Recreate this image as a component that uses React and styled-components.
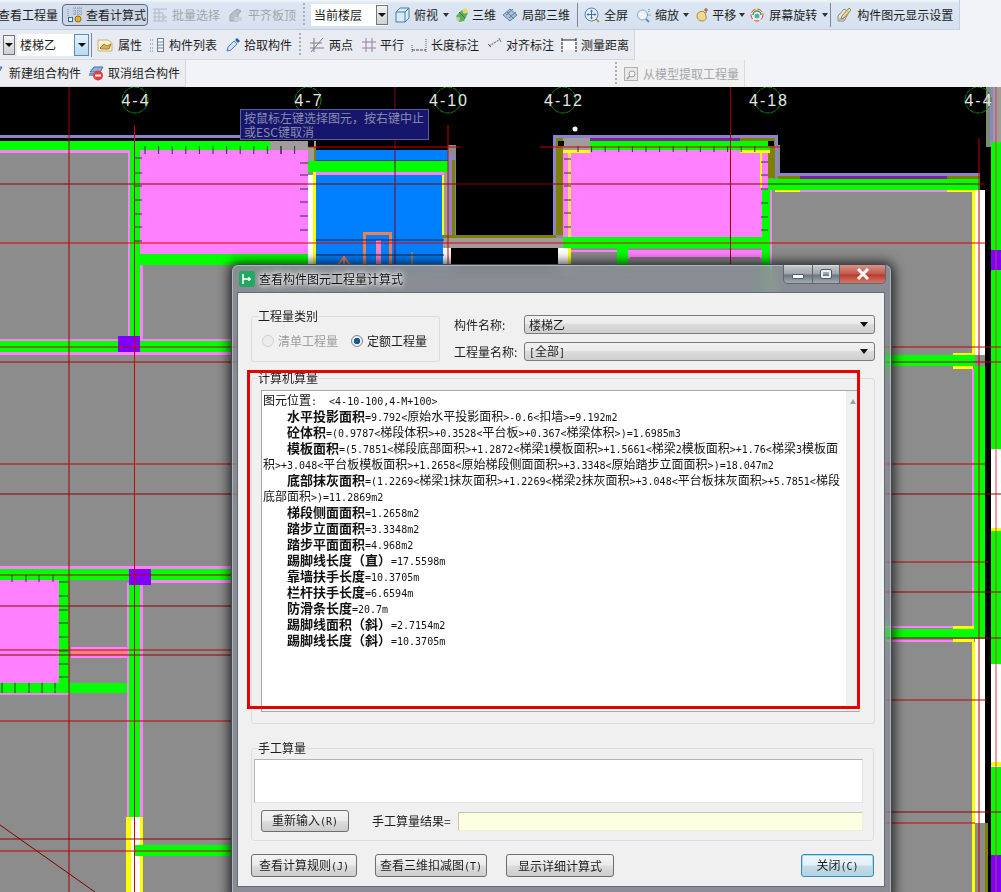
import React from 'react'
import styled, { createGlobalStyle } from 'styled-components'

const GlobalStyle = createGlobalStyle`
    html, body {
        margin: 0;
        padding: 0;
        background: #000;
    }
    body {
        font-family: "Noto Sans CJK SC", "Liberation Sans", sans-serif;
        font-size: 12px;
        color: #1c1c1c;
    }
`

// half width latin like the old bitmap font, CJK stays 12px
const Half = styled.span`
    font-family: "DejaVu Sans Mono", monospace;
    font-size: 10px;
`
const Mix = ({ children }) => (
    <span>
        {String(children).split(/([\x00-\x7f]+)/).map((part, i) =>
            i % 2 === 1 ? <Half key={i}>{part}</Half> : part
        )}
    </span>
)

/* ---------- toolbar icons ---------- */
const icons = {
    calc: <>
        <path d="M6 1h9M6 4h9M6 7h9M8 1v8M11 1v8M14 1v8" stroke="#7f8fa6" strokeWidth="1" fill="none" strokeDasharray="1 1" />
        <path d="M1 2v7" stroke="#7f8fa6" strokeDasharray="1 1" />
        <rect x="1.5" y="10.5" width="4" height="4" fill="#fff" stroke="#2a62b8" />
        <circle cx="11" cy="12" r="3" fill="#e8b030" stroke="#9a6a10" />
    </>,
    batch: <>
        <path d="M1 2h14M1 6h10M1 10h10M1 14h14M3 2v12M7 2v12" stroke="#b4bac4" fill="none" />
        <path d="M10 6l5 4-5 4z" fill="#c2c8d2" />
    </>,
    flat: <>
        <path d="M2 14V8l7-6 4 2-3 4v6z" fill="#b9bec6" stroke="#a0a6b0" />
        <rect x="6" y="10" width="8" height="4" fill="#ccd0d6" />
    </>,
    cube: <>
        <path d="M2 5l4-4h9v10l-4 4H2z" fill="#d6ecf8" stroke="#4c7d9c" />
        <path d="M2 5h9v10M11 5l4-4" fill="none" stroke="#4c7d9c" />
    </>,
    three: <>
        <path d="M2 9l6-6 6 3-4 8-5 1z" fill="#58b060" />
        <circle cx="11" cy="4" r="2.5" fill="#e8d860" />
        <circle cx="4" cy="12" r="2" fill="#d8c8a0" />
        <path d="M5 5l6 6" stroke="#2e7e3c" />
    </>,
    local: <>
        <path d="M1 8l7-6 7 6-7 6z" fill="#a8c0d8" stroke="#5f7f9f" />
        <path d="M4 8l7-6M7 11l7-6M5 5l7 7" stroke="#5f7f9f" fill="none" />
    </>,
    full: <>
        <circle cx="7.5" cy="7.5" r="6.5" fill="#e4eef8" stroke="#5a7fa8" />
        <path d="M7.5 3v9M3 7.5h9" stroke="#3c6ea8" />
        <path d="M6 4.5l1.5-2 1.5 2zM6 10.5l1.5 2 1.5-2zM4.5 6l-2 1.5 2 1.5zM10.5 6l2 1.5-2 1.5z" fill="#3c6ea8" />
        <path d="M12 12l3 3" stroke="#c08030" strokeWidth="1.5" />
    </>,
    zoom: <>
        <circle cx="6.5" cy="8" r="5" fill="#eef4fa" stroke="#8ca8c4" />
        <path d="M10 12l3 3" stroke="#6c8cac" strokeWidth="2" />
        <path d="M13 2v4M11.5 8h3" stroke="#3c6ea8" strokeDasharray="1 1" />
    </>,
    pan: <>
        <path d="M3 9c0-3 2-4 3-4l1-1 1 1 1-1 2 2 1 3c1 3-1 5-4 5s-5-2-5-5z" fill="#f0d890" stroke="#b09040" />
        <path d="M12 1v5M10 3h4" stroke="#a04040" />
    </>,
    rotate: <>
        <circle cx="8" cy="8" r="6" fill="#f4f0d8" stroke="#e04030" strokeDasharray="5 2" />
        <path d="M4 8a4 4 0 0 1 8 0" stroke="#30a050" fill="none" strokeWidth="1.5" />
        <circle cx="8" cy="9" r="2.5" fill="#50a8d8" />
    </>,
    setting: <>
        <path d="M2 9l6-7 5 3-5 9H2z" fill="#e4e4e4" stroke="#8c8c8c" />
        <path d="M13 1L6 9l-1 3 3-1 7-8z" fill="#e8d890" stroke="#98884c" />
        <path d="M3 12h5" stroke="#7090b0" />
    </>,
    prop: <>
        <path d="M1 3h10l4 3v8H1z" fill="#fbf2d8" stroke="#c8b078" />
        <path d="M3 11l4-4 3 2 4-2-2 5H4z" fill="#e0b050" stroke="#a88030" />
    </>,
    list: <>
        <path d="M1 3h3M1 7h3M1 11h3M1 14h3" stroke="#6c8098" strokeDasharray="1 1" />
        <rect x="8.5" y="1.5" width="6" height="13" fill="#f6f8fa" stroke="#6c8098" />
        <path d="M8 5h7M8 8h7M8 11h7" stroke="#6c8098" />
    </>,
    pick: <>
        <path d="M2 14l1-4 6-6 3 3-6 6z" fill="#cfe2f6" stroke="#4c7cc0" />
        <path d="M10 3l2-2 3 3-2 2z" fill="#2c5ca0" />
    </>,
    twoPts: <>
        <path d="M1 11h14M1 6h12" stroke="#8c7c90" />
        <path d="M5 1v14M14 1L2 15" stroke="#7c7c88" />
    </>,
    parallel: <>
        <path d="M5 1v14M11 1v14M1 5h14M1 11h14" stroke="#9c7ca4" />
    </>,
    lenDim: <>
        <path d="M1 8v7M15 2v13" stroke="#3c6c5c" strokeDasharray="1 1" />
        <path d="M1 13h14" stroke="#404040" strokeDasharray="3 1" />
    </>,
    alignDim: <>
        <path d="M2 7l3 3M3 9l10-6" stroke="#4c4c4c" strokeDasharray="2 1" />
        <path d="M13 1l2 4" stroke="#3c8c5c" />
    </>,
    measure: <>
        <rect x="2" y="3" width="12" height="10" fill="#fff" />
        <path d="M1 1v14M15 1v14" stroke="#222" strokeDasharray="3 1" />
        <path d="M1 3h14" stroke="#222" />
    </>,
    newGroup: <>
        <path d="M2 2h11l-4 7-7-2z" fill="#8cb4e0" stroke="#3c6cac" />
    </>,
    cancelGroup: <>
        <path d="M2 7l4-5h9l-3 5z" fill="#8cb4e0" stroke="#3c6cac" />
        <rect x="1" y="8" width="7" height="3" fill="#6c9cd4" />
        <circle cx="10" cy="10.5" r="5" fill="#e04040" />
        <rect x="7" y="9.5" width="6" height="2" fill="#fff" />
    </>,
    extract: <>
        <rect x="1.5" y="1.5" width="13" height="13" fill="#e8e8e8" stroke="#b0b0b0" />
        <circle cx="9" cy="8" r="3" fill="#f4f4f4" stroke="#a0a0a0" />
        <path d="M7 10l-3 3" stroke="#a0a0a0" strokeWidth="1.5" />
    </>,
}

const Icon = ({ name }) => <IconSvg viewBox="0 0 16 16">{icons[name]}</IconSvg>

const Tool = ({ icon, label, ml = 0, gap = 4, caret, off }) => (
    <ToolItem $ml={ml} $gap={gap} $off={off}>
        {icon && <Icon name={icon} />}
        <span>{label}</span>
        {caret && <Caret />}
    </ToolItem>
)

/* ---------- cad drawing data, page coordinates ---------- */
const G = '#00ff00', P = '#ff80ff', Y = '#ffff00', W = '#ffffff', B = '#0080ff'
const GR = '#8c8c8c', O = '#808000', V = '#8c84c8', PU = '#8000ff', K = '#000000', DG = '#a09c9c'

const rects = [
    [0, 87, 1001, 805, K],
    [0, 145, 456, 747, GR],
    [456, 248, 324, 644, GR],
    [556, 145, 224, 120, GR],
    [770, 176, 215, 716, GR],
    // left upper room
    [0, 135, 308, 3, V],
    [0, 141, 270, 9, G],
    [270, 141, 38, 9, DG],
    [0, 150, 128, 3, P],
    [128, 150, 2, 190, P],
    [130, 141, 10, 200, G],
    [140, 150, 168, 104, P],
    [134, 254, 174, 11, G],
    [140, 265, 3, 75, P],
    [0, 339, 231, 2, P],
    [0, 341, 231, 11, G],
    [0, 352, 231, 3, P],
    [118, 336, 22, 16, PU],
    // blue stair
    [308, 141, 8, 20, DG],
    [308, 141, 6, 6, K],
    [314, 147, 2, 14, O],
    [316, 145, 132, 5, K],
    [316, 150, 132, 10, B],
    [316, 160, 132, 2, '#404080'],
    [308, 161, 140, 11, G],
    [316, 172, 128, 3, P],
    [316, 175, 128, 90, B],
    [308, 175, 5, 90, W],
    [313, 172, 3, 93, Y],
    [442, 175, 2, 60, Y],
    [444, 172, 4, 63, P],
    [448, 156, 7, 80, V],
    [452, 160, 3, 75, O],
    [456, 87, 100, 161, K],
    [443, 235, 113, 3, O],
    [443, 238, 120, 10, DG],
    [444, 172, 4, 63, DG],
    [443, 248, 8, 17, W],
    [451, 248, 107, 17, K],
    [363, 232, 29, 3, '#f08050'],
    [363, 232, 3, 33, '#f08050'],
    [389, 232, 3, 33, '#f08050'],
    [376, 240, 5, 25, '#ff80c0'],
    [411, 252, 2, 13, '#a08060'],
    // second stair
    [553, 135, 225, 3, V],
    [553, 135, 3, 100, V],
    [775, 135, 3, 40, V],
    [556, 138, 7, 97, O],
    [768, 138, 7, 40, O],
    [563, 138, 27, 14, DG],
    [590, 138, 150, 3, '#8020a0'],
    [590, 141, 150, 9, G],
    [740, 138, 30, 3, O],
    [740, 141, 30, 9, G],
    [558, 141, 6, 5, K],
    [768, 141, 6, 5, K],
    [563, 150, 27, 3, Y],
    [740, 150, 30, 3, Y],
    [590, 150, 150, 3, P],
    [563, 153, 8, 84, P],
    [568, 153, 3, 84, '#ffd860'],
    [571, 153, 191, 84, P],
    [760, 153, 2, 35, Y],
    [762, 153, 6, 37, P],
    [762, 190, 6, 75, G],
    [563, 237, 205, 11, G],
    [558, 248, 10, 17, W],
    [568, 248, 3, 17, Y],
    [571, 248, 46, 17, GR],
    [571, 250, 46, 2, P],
    [617, 248, 11, 17, G],
    [628, 250, 134, 8, P],
    [630, 257, 130, 2, '#907090'],
    // right room
    [778, 173, 202, 3, V],
    [778, 176, 22, 3, O],
    [800, 176, 147, 3, '#8020a0'],
    [947, 176, 33, 3, O],
    [768, 179, 212, 11, G],
    [768, 190, 2, 170, G],
    [770, 190, 2, 170, P],
    [775, 190, 25, 2, Y],
    [800, 190, 147, 2, P],
    [947, 190, 28, 2, Y],
    [972, 190, 3, 165, Y],
    [975, 190, 10, 165, W],
    [985, 145, 6, 747, K],
    [980, 145, 5, 45, K],
    [986, 87, 4, 60, '#7c8c70'],
    [990, 87, 3, 60, V],
    [993, 87, 8, 55, DG],
    [991, 142, 10, 307, G],
    [991, 250, 10, 20, PU],
    [991, 449, 10, 82, W],
    [991, 528, 10, 3, Y],
    [991, 531, 10, 133, G],
    [991, 664, 10, 103, W],
    [991, 762, 10, 4, Y],
    [991, 767, 10, 88, G],
    [991, 855, 10, 37, PU],
    // right lower
    [770, 355, 205, 11, G],
    [953, 353, 22, 2, Y],
    [953, 366, 20, 3, Y],
    [974, 366, 11, 264, G],
    [972, 369, 2, 257, P],
    [770, 626, 183, 2, P],
    [953, 626, 21, 3, Y],
    [770, 629, 215, 9, G],
    [770, 640, 183, 2, P],
    [953, 639, 21, 3, Y],
    [972, 642, 3, 250, Y],
    [975, 639, 10, 253, W],
    [975, 823, 13, 69, GR],
    [985, 823, 3, 69, O],
    // left lower
    [0, 566, 231, 3, P],
    [0, 569, 231, 11, G],
    [143, 580, 88, 3, P],
    [0, 580, 59, 103, P],
    [59, 580, 10, 113, G],
    [0, 683, 128, 10, G],
    [0, 693, 69, 2, P],
    [71, 647, 57, 11, P],
    [71, 650, 57, 5, '#ff8080'],
    [127, 583, 2, 234, P],
    [129, 580, 11, 237, G],
    [140, 583, 3, 234, P],
    [129, 569, 22, 16, PU],
    [126, 817, 17, 75, Y],
    [131, 817, 9, 75, W],
    [135, 845, 96, 11, G],
]

const range = (from, step, count) => Array.from({ length: count }, (_, i) => from + i * step)

const ticks = [
    ...range(145, 13.6, 12).map(x => [x, 146, x, 154]),
    ...range(281, 14, 1).map(x => [x, 146, x, 154]),
    ...[158, 173, 186, 200, 214, 227, 241].map(y => [134, y, 142, y]),
    ...[163, 175, 189, 202, 216, 230].map(y => [300, y, 308, y]),
    ...range(578, 13.6, 14).map(x => [x, 146, x, 152]),
    ...[159, 173, 186, 200, 213, 227].map(y => [564, y, 571, y]),
    ...[162, 175, 189, 203, 217, 230].map(y => [761, y, 768, y]),
    ...[12, 26, 39, 53].map(x => [x, 575, x, 582]),
    ...[582, 596, 610, 623, 637, 651, 664, 677].map(y => [59, y, 68, y]),
    ...[2, 15, 29, 42, 55].map(x => [x, 683, x, 693]),
]

const redLines = [
    [69, 87, 69, 892, '#a00000'],
    [134.5, 125, 134.5, 892, '#d00000'],
    [395, 87, 395, 265, '#800030'],
    [448, 125, 448, 265, '#d00000'],
    [730.5, 87, 730.5, 265, '#a00000'],
    [979, 138, 979, 892, '#c00000'],
    [996, 87, 996, 892, '#d04040'],
    [308, 147, 460, 147, '#d00000'],
    [540, 147, 780, 147, '#d00000'],
    [0, 184, 985, 184, '#900000'],
    [0, 243, 985, 243, '#e00000'],
    [0, 347, 1001, 347, '#c00000'],
    [0, 362, 1001, 362, '#b00000'],
    [0, 464, 985, 464, '#c00000'],
    [0, 494, 1001, 494, '#900000'],
    [885, 562, 988, 562, '#c00000'],
    [885, 592, 1001, 592, '#a00000'],
    [885, 638, 1001, 638, '#900000'],
    [885, 700, 986, 700, '#c00000'],
    [885, 812, 1001, 812, '#900000'],
    [885, 823, 975, 823, '#d00000'],
    [0, 575, 231, 575, '#b00000'],
    [0, 606, 231, 606, '#900000'],
    [0, 650, 231, 650, '#c00000'],
    [0, 655, 231, 655, '#900000'],
    [0, 721, 231, 721, '#c00000'],
    [0, 839, 231, 839, '#900000'],
    [0, 851, 231, 851, '#c00000'],
    [0, 825, 95, 892, '#800000'],
]

const axes = [[135, '4-4'], [308, '4-7'], [448, '4-10'], [563, '4-12'], [768, '4-18'], [978, '4-4']]

const Drawing = () => (
    <CadSvg viewBox="0 87 1001 805">
        {rects.map(([x, y, w, h, c], i) => <rect key={i} x={x} y={y} width={w} height={h} fill={c} />)}
        {ticks.map(([x1, y1, x2, y2], i) => <line key={i} x1={x1} y1={y1} x2={x2} y2={y2} stroke="#303048" />)}
        <path d="M338 265l6-8 6 8M344 257v8" stroke="#f08050" strokeWidth="2" fill="none" />
        <path d="M316 240h128M316 255h128" stroke="#202040" />
        {redLines.map(([x1, y1, x2, y2, c], i) => <line key={i} x1={x1} y1={y1} x2={x2} y2={y2} stroke={c} />)}
        {axes.map(([x, name]) => (
            <g key={x + name}>
                <circle cx={x} cy={100} r={13} fill="none" stroke="#0c8c0c" strokeDasharray="5 1" />
                <AxisText x={x + 1} y={105.5} textAnchor="middle">{name}</AxisText>
            </g>
        ))}
        <circle cx={575} cy={129} r={2.5} fill="#fff" />
    </CadSvg>
)

/* ---------- calculation text ---------- */
const calcLines = [
    { text: '图元位置:  <4-10-100,4-M+100>' },
    { label: '水平投影面积', text: '=9.792<原始水平投影面积>-0.6<扣墙>=9.192m2' },
    { label: '砼体积', text: '=(0.9787<梯段体积>+0.3528<平台板>+0.367<梯梁体积>)=1.6985m3' },
    { label: '模板面积', text: '=(5.7851<梯段底部面积>+1.2872<梯梁1模板面积>+1.5661<梯梁2模板面积>+1.76<梯梁3模板面' },
    { text: '积>+3.048<平台板模板面积>+1.2658<原始梯段侧面面积>+3.3348<原始踏步立面面积>)=18.047m2' },
    { label: '底部抹灰面积', text: '=(1.2269<梯梁1抹灰面积>+1.2269<梯梁2抹灰面积>+3.048<平台板抹灰面积>+5.7851<梯段' },
    { text: '底部面积>)=11.2869m2' },
    { label: '梯段侧面面积', text: '=1.2658m2' },
    { label: '踏步立面面积', text: '=3.3348m2' },
    { label: '踏步平面面积', text: '=4.968m2' },
    { label: '踢脚线长度（直）', text: '=17.5598m' },
    { label: '靠墙扶手长度', text: '=10.3705m' },
    { label: '栏杆扶手长度', text: '=6.6594m' },
    { label: '防滑条长度', text: '=20.7m' },
    { label: '踢脚线面积（斜）', text: '=2.7154m2' },
    { label: '踢脚线长度（斜）', text: '=10.3705m' },
]

export default function App() {
    return (
        <Page>
            <GlobalStyle />

            <ToolRow $bg="linear-gradient(#f4f7fb 0, #dde6f3 3px, #d6e0ef 100%)" $line="#c3cede" $width={960}>
                <Tool label="查看工程量" ml={-2} />
                <Pressed>
                    <Icon name="calc" />
                    <span>查看计算式</span>
                </Pressed>
                <Tool icon="batch" label="批量选择" ml={4} off />
                <Tool icon="flat" label="平齐板顶" ml={8} off />
                <Grip $ml={7} />
                <ToolSelect $ml={6} $width={77}>
                    <span>当前楼层</span>
                    <SelectArrow />
                </ToolSelect>
                <Tool icon="cube" label="俯视" ml={6} caret />
                <Tool icon="three" label="三维" ml={5} gap={2} />
                <Tool icon="local" label="局部三维" ml={6} />
                <Sep $ml={7} />
                <Tool icon="full" label="全屏" ml={6} />
                <Tool icon="zoom" label="缩放" ml={8} gap={3} caret />
                <Tool icon="pan" label="平移" ml={5} gap={2} caret />
                <Tool icon="rotate" label="屏幕旋转" ml={4} caret />
                <Sep $ml={2} />
                <Tool icon="setting" label="构件图元显示设置" ml={5} gap={5} />
            </ToolRow>

            <ToolRow $bg="#e8ebf1" $line="#d2d6de" $width={635}>
                <SelectArrow $ml={3} />
                <ToolSelect $ml={2} $width={72} $focus>
                    <span>楼梯乙</span>
                    <SelectArrow $focus />
                </ToolSelect>
                <Sep $ml={2} />
                <Tool icon="prop" label="属性" ml={5} gap={5} />
                <Tool icon="list" label="构件列表" ml={7} />
                <Tool icon="pick" label="拾取构件" ml={8} gap={3} />
                <Grip $ml={7} />
                <Tool icon="twoPts" label="两点" ml={8} />
                <Tool icon="parallel" label="平行" ml={8} gap={3} />
                <Tool icon="lenDim" label="长度标注" ml={7} />
                <Tool icon="alignDim" label="对齐标注" ml={7} />
                <Tool icon="measure" label="测量距离" ml={7} />
            </ToolRow>

            <LastRow>
                <ToolRow $bg="#eceef2" $line="#d2d6de" $width={186} $h={27}>
                    <Tool icon="newGroup" label="新建组合构件" ml={-11} />
                    <Tool icon="cancelGroup" label="取消组合构件" ml={7} />
                </ToolRow>
                <ExtractBar>
                    <Grip $ml={1} />
                    <Tool icon="extract" label="从模型提取工程量" ml={6} off />
                </ExtractBar>
            </LastRow>

            <Drawing />

            <HintBox>
                按鼠标左键选择图元，按右键中止
                <br />
                或ESC键取消
            </HintBox>

            <Dialog>
                <TitleBar>
                    <AppIcon viewBox="0 0 16 16">
                        <rect width="16" height="16" rx="3" fill="#22a860" />
                        <path d="M4 3v10M4 8h8M10 6v4" stroke="#fff" strokeWidth="1.5" fill="none" />
                    </AppIcon>
                    <TitleText>查看构件图元工程量计算式</TitleText>
                    <WinButtons>
                        <WinButton $w={28}><MinGlyph /></WinButton>
                        <WinButton $w={27}><MaxGlyph /></WinButton>
                        <WinButton $w={46} $close>
                            <svg width="14" height="12" viewBox="0 0 14 12">
                                <path d="M2 1l10 10M12 1L2 11" stroke="#fff" strokeWidth="3" />
                            </svg>
                        </WinButton>
                    </WinButtons>
                </TitleBar>

                <Client>
                    <TopRow>
                        <Group $w={189} $h={54}>
                            <GroupTitle>工程量类别</GroupTitle>
                            <RadioRow>
                                <Radio />
                                <RadioLabel $off>清单工程量</RadioLabel>
                                <Radio $checked $ml={9} />
                                <RadioLabel>定额工程量</RadioLabel>
                            </RadioRow>
                        </Group>
                        <FormCol>
                            <FormRow>
                                <FormLabel>构件名称:</FormLabel>
                                <Select><span>楼梯乙</span><SmallArrow /></Select>
                            </FormRow>
                            <FormRow>
                                <FormLabel>工程量名称:</FormLabel>
                                <Select><Mix>[全部]</Mix><SmallArrow /></Select>
                            </FormRow>
                        </FormCol>
                    </TopRow>

                    <Group $w={624} $h={354} $mt={8}>
                        <GroupTitle>计算机算量</GroupTitle>
                        <CalcBox>
                            <CalcText>
                                {calcLines.map((line, i) => (
                                    <CalcLine key={i} $indent={!!line.label}>
                                        {line.label && <Strong>{line.label}</Strong>}
                                        <Mix>{line.text}</Mix>
                                    </CalcLine>
                                ))}
                            </CalcText>
                            <ScrollBar><ScrollUp /></ScrollBar>
                        </CalcBox>
                    </Group>

                    <Group $w={623} $h={101} $mt={16}>
                        <GroupTitle>手工算量</GroupTitle>
                        <ManualInput />
                        <ManualRow>
                            <Button $w={88} $h={22}><Mix>重新输入(R)</Mix></Button>
                            <ResultLabel>手工算量结果=</ResultLabel>
                            <ResultInput />
                        </ManualRow>
                    </Group>

                    <Footer>
                        <Button $w={106}><Mix>查看计算规则(J)</Mix></Button>
                        <Button $w={112} $ml={18}><Mix>查看三维扣减图(T)</Mix></Button>
                        <Button $w={108} $ml={19}>显示详细计算式</Button>
                        <CloseButton $w={73}><Mix>关闭(C)</Mix></CloseButton>
                    </Footer>
                </Client>
            </Dialog>

            <Marker />
        </Page>
    )
}

const Page = styled.div`
    position: relative;
    width: 1001px;
    height: 892px;
    overflow: hidden;
    background: #f1f3f6;
    display: flex;
    flex-direction: column;
`
const ToolRow = styled.div`
    flex: none;
    display: flex;
    align-items: center;
    width: ${({ $width }) => $width}px;
    height: ${({ $h }) => $h ?? 30}px;
    box-sizing: border-box;
    background: ${({ $bg }) => $bg};
    border-bottom: 1px solid ${({ $line }) => $line};
    border-right: 1px solid ${({ $line }) => $line};
    overflow: hidden;
    white-space: nowrap;
`
const LastRow = styled.div`
    flex: none;
    display: flex;
    height: 27px;
`
const ExtractBar = styled.div`
    display: flex;
    align-items: center;
    box-sizing: border-box;
    margin-left: 428px;
    width: 131px;
    height: 27px;
    background: #f1f1f1;
    border-right: 1px solid #dcdcdc;
`
const ToolItem = styled.div`
    flex: none;
    display: flex;
    align-items: center;
    gap: ${({ $gap }) => $gap}px;
    margin-left: ${({ $ml }) => $ml}px;
    line-height: 16px;
    color: ${({ $off }) => ($off ? '#a2a6ac' : '#1c1c1c')};
`
const IconSvg = styled.svg`
    flex: none;
    width: 16px;
    height: 16px;
`
const Caret = styled.i`
    width: 0;
    height: 0;
    margin-left: 1px;
    border-left: 3px solid transparent;
    border-right: 3px solid transparent;
    border-top: 4px solid #333;
`
const Pressed = styled.div`
    flex: none;
    display: flex;
    align-items: center;
    gap: 3px;
    box-sizing: border-box;
    width: 86px;
    height: 22px;
    margin-left: 4px;
    padding-left: 4px;
    border: 1px solid #5c6a7c;
    border-radius: 4px;
    background: #cbd6e6;
    line-height: 16px;
`
const Grip = styled.i`
    flex: none;
    width: 2px;
    height: 24px;
    margin-left: ${({ $ml }) => $ml}px;
    background: repeating-linear-gradient(#a9afb8 0 2px, transparent 2px 4px);
`
const Sep = styled.i`
    flex: none;
    width: 1px;
    height: 24px;
    margin-left: ${({ $ml }) => $ml}px;
    background: #7c8794;
`
const ToolSelect = styled.div`
    flex: none;
    display: flex;
    align-items: center;
    justify-content: space-between;
    box-sizing: border-box;
    width: ${({ $width }) => $width}px;
    height: 22px;
    margin-left: ${({ $ml }) => $ml}px;
    padding-left: 3px;
    background: #fff;
    line-height: 16px;
`
const SelectArrow = styled.i`
    flex: none;
    position: relative;
    display: flex;
    align-items: center;
    justify-content: center;
    box-sizing: border-box;
    width: ${({ $focus }) => ($focus ? 15 : 12)}px;
    height: ${({ $focus }) => ($focus ? 22 : 20)}px;
    margin-left: ${({ $ml }) => $ml ?? 0}px;
    border: 1px solid ${({ $focus }) => ($focus ? '#5c8cb8' : '#70767e')};
    background: ${({ $focus }) => ($focus ? 'linear-gradient(#e4f2fb, #b8daf0)' : 'linear-gradient(#f4f4f4, #cfcfcf)')};
    &::after {
        content: '';
        border-left: 4px solid transparent;
        border-right: 4px solid transparent;
        border-top: 4px solid #111;
    }
`
const CadSvg = styled.svg`
    flex: none;
    display: block;
    width: 1001px;
    height: 805px;
`
const AxisText = styled.text`
    font-family: "Liberation Sans", sans-serif;
    font-size: 16px;
    letter-spacing: 2px;
    fill: #e6e6e6;
`
const HintBox = styled.div`
    position: absolute;
    left: 240px;
    top: 109px;
    box-sizing: border-box;
    width: 189px;
    height: 31px;
    padding: 1px 0 0 3px;
    background: #16166c;
    border: 1px solid #5c5c98;
    color: #8c8cac;
    line-height: 14px;
    white-space: nowrap;
`
const Dialog = styled.div`
    position: absolute;
    left: 231px;
    top: 264px;
    width: 661px;
    height: 634px;
    box-sizing: border-box;
    border: 1px solid #3c4a58;
    border-radius: 7px 7px 0 0;
    background: rgba(120, 150, 190, 0.14);
    backdrop-filter: blur(7px);
    box-shadow: 0 0 12px 2px rgba(0, 0, 0, 0.75), inset 0 0 0 1px rgba(255, 255, 255, 0.35);
`
const TitleBar = styled.div`
    display: flex;
    align-items: center;
    height: 27px;
    padding-left: 7px;
`
const AppIcon = styled.svg`
    flex: none;
    width: 16px;
    height: 16px;
`
const TitleText = styled.span`
    margin-left: 4px;
    line-height: 16px;
    color: #111;
    text-shadow: 0 0 7px #fff, 0 0 7px #fff, 0 0 3px rgba(255, 255, 255, 0.8);
`
const WinButtons = styled.div`
    display: flex;
    align-self: flex-start;
    margin-left: auto;
    margin-right: 5px;
    border: 1px solid #56677a;
    border-top: none;
    border-radius: 0 0 5px 5px;
    overflow: hidden;
`
const WinButton = styled.div`
    display: flex;
    align-items: center;
    justify-content: center;
    box-sizing: border-box;
    width: ${({ $w }) => $w}px;
    height: 18px;
    border-left: 1px solid #56677a;
    background: ${({ $close }) => ($close
        ? 'linear-gradient(#d9938a, #c4574a 50%, #b93a2c 55%, #d47a66)'
        : 'linear-gradient(rgba(255,255,255,.55), rgba(255,255,255,.2) 50%, rgba(40,60,80,.3) 55%, rgba(255,255,255,.25))')};
    &:first-child {
        border-left: none;
    }
`
const MinGlyph = styled.i`
    width: 10px;
    height: 3px;
    margin-top: 5px;
    background: #fff;
    border: 1px solid #4c5c70;
    border-radius: 1px;
`
const MaxGlyph = styled.i`
    width: 6px;
    height: 4px;
    background: transparent;
    border: 2px solid #eef2f6;
    outline: 1px solid #4c5c70;
    border-radius: 1px;
`
const Client = styled.div`
    display: flex;
    flex-direction: column;
    box-sizing: border-box;
    width: 648px;
    height: 595px;
    margin-left: 5px;
    padding: 15px 0 0 13px;
    background: #f0f0f0;
    border: 1px solid #5c6c7c;
`
const TopRow = styled.div`
    display: flex;
    gap: 14px;
`
const Group = styled.fieldset`
    flex: none;
    box-sizing: border-box;
    width: ${({ $w }) => $w}px;
    height: ${({ $h }) => $h}px;
    min-width: 0;
    margin: ${({ $mt }) => $mt ?? 0}px 0 0 0;
    padding: 0;
    border: 1px solid #dcdcdc;
    border-radius: 3px;
`
const GroupTitle = styled.legend`
    margin-left: 6px;
    padding: 0;
    line-height: 16px;
`
const RadioRow = styled.div`
    display: flex;
    align-items: center;
    gap: 4px;
    height: 16px;
    margin: 9px 0 0 10px;
`
const Radio = styled.i`
    flex: none;
    box-sizing: border-box;
    width: 12px;
    height: 12px;
    margin-left: ${({ $ml }) => $ml ?? 0}px;
    border-radius: 50%;
    border: 1px solid ${({ $checked }) => ($checked ? '#7c8894' : '#d0d0d0')};
    background: ${({ $checked }) => ($checked ? 'radial-gradient(circle, #1c5c8c 0 3px, #e8eef4 3.5px)' : '#ececec')};
`
const RadioLabel = styled.span`
    line-height: 16px;
    color: ${({ $off }) => ($off ? '#9c9c9c' : '#1c1c1c')};
`
const FormCol = styled.div`
    display: flex;
    flex-direction: column;
    gap: 8px;
    width: 421px;
    margin-top: 7px;
`
const FormRow = styled.div`
    display: flex;
    align-items: center;
    height: 19px;
`
const FormLabel = styled.span`
    flex: none;
    width: 70px;
    line-height: 16px;
`
const Select = styled.div`
    flex: 1;
    display: flex;
    align-items: center;
    justify-content: space-between;
    box-sizing: border-box;
    height: 19px;
    padding: 0 6px 0 4px;
    border: 1px solid #7a7a7a;
    border-radius: 3px;
    background: linear-gradient(#f2f2f2, #ebebeb 45%, #dcdcdc 50%, #cfcfcf);
    line-height: 16px;
`
const SmallArrow = styled.i`
    border-left: 4px solid transparent;
    border-right: 4px solid transparent;
    border-top: 5px solid #111;
`
const CalcBox = styled.div`
    display: flex;
    box-sizing: border-box;
    width: 599px;
    height: 322px;
    margin: 4px 0 0 9px;
    background: #fff;
    border: 1px solid #a8a8a8;
    border-right-color: #dcdcdc;
`
const CalcText = styled.div`
    flex: 1;
    min-width: 0;
    overflow: hidden;
    padding: 1px 0 0 1px;
`
const CalcLine = styled.div`
    height: 16px;
    line-height: 16px;
    padding-left: ${({ $indent }) => ($indent ? 24 : 0)}px;
    white-space: pre;
    color: #111;
`
const Strong = styled.b`
    font-size: 13px;
    font-weight: 700;
`
const ScrollBar = styled.div`
    flex: none;
    display: flex;
    justify-content: center;
    width: 13px;
    padding-top: 8px;
    box-sizing: border-box;
    background: #f0f0f0;
`
const ScrollUp = styled.i`
    width: 0;
    height: 0;
    border-left: 3px solid transparent;
    border-right: 3px solid transparent;
    border-bottom: 5px solid #a0a0a0;
`
const ManualInput = styled.div`
    box-sizing: border-box;
    width: 609px;
    height: 44px;
    margin: 3px 0 0 2px;
    background: #fff;
    border: 1px solid #b4b4b4;
    border-right-color: #e4e4e4;
    border-bottom-color: #e4e4e4;
`
const ManualRow = styled.div`
    display: flex;
    align-items: center;
    margin: 7px 0 0 9px;
`
const Button = styled.div`
    flex: none;
    display: flex;
    align-items: center;
    justify-content: center;
    box-sizing: border-box;
    width: ${({ $w }) => $w}px;
    height: ${({ $h }) => $h ?? 23}px;
    margin-left: ${({ $ml }) => $ml ?? 0}px;
    border: 1px solid #6e6e6e;
    border-radius: 3px;
    background: linear-gradient(#f4f4f4, #ebebeb 48%, #dddddd 52%, #cdcdcd);
    line-height: 16px;
    white-space: nowrap;
`
const CloseButton = styled(Button)`
    margin-left: auto;
    margin-right: 10px;
    border-color: #3a87b4;
    background: linear-gradient(#eef7fc, #e0f0f8 48%, #c8dce8 52%, #b4d0e0);
    box-shadow: inset 0 0 0 1px #9fe0f6;
`
const ResultLabel = styled.span`
    flex: none;
    margin-left: 23px;
    width: 86px;
    line-height: 16px;
`
const ResultInput = styled.div`
    flex: none;
    box-sizing: border-box;
    width: 405px;
    height: 19px;
    background: #ffffe1;
    border: 1px solid #c4c4b4;
    border-right-color: #eeeedd;
    border-bottom-color: #eeeedd;
`
const Footer = styled.div`
    display: flex;
    margin-top: 13px;
`
const Marker = styled.div`
    position: absolute;
    left: 247px;
    top: 370px;
    box-sizing: border-box;
    width: 613px;
    height: 339px;
    border: 3px solid #e60000;
    pointer-events: none;
`
